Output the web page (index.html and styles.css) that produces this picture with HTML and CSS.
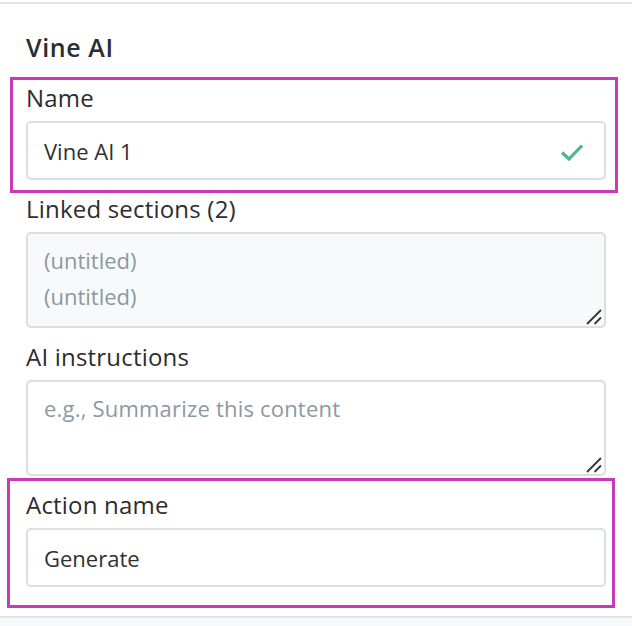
FILE: index.html
```html
<!DOCTYPE html>
<html lang="en">
<head>
<meta charset="utf-8">
<title>Vine AI</title>
<link rel="stylesheet" href="styles.css">
</head>
<body>
<div class="panel">
  <h2 class="title">Vine AI</h2>
  <div class="field">
    <label class="label" for="name">Name</label>
    <div class="control">
      <input class="input" id="name" type="text" value="Vine AI 1">
      <svg class="check" viewBox="0 0 24 18" width="24" height="18" aria-hidden="true">
        <path d="M2 9.5 L9 16 L22 2.5" fill="none" stroke="#4bb88b" stroke-width="3.2"/>
      </svg>
    </div>
  </div>
  <div class="field">
    <label class="label" for="linked">Linked sections (2)</label>
    <div class="control">
      <textarea class="textarea disabled" id="linked" disabled>(untitled)
(untitled)</textarea>
      <svg class="grip" viewBox="0 0 16 16" width="16" height="16" aria-hidden="true">
        <path d="M1 15 L15 1 M8.5 15 L15 8.5" stroke="#333538" stroke-width="1.8" fill="none"/>
      </svg>
    </div>
  </div>
  <div class="field">
    <label class="label" for="instr">AI instructions</label>
    <div class="control">
      <textarea class="textarea" id="instr" placeholder="e.g., Summarize this content"></textarea>
      <svg class="grip" viewBox="0 0 16 16" width="16" height="16" aria-hidden="true">
        <path d="M1 15 L15 1 M8.5 15 L15 8.5" stroke="#333538" stroke-width="1.8" fill="none"/>
      </svg>
    </div>
  </div>
  <div class="field">
    <label class="label" for="action">Action name</label>
    <div class="control">
      <input class="input" id="action" type="text" value="Generate">
    </div>
  </div>
</div>
<div class="footer"></div>
<div class="highlight hl-name"></div>
<div class="highlight hl-action"></div>
</body>
</html>
```
FILE: styles.css
```css
* { box-sizing: border-box; }
html, body { margin: 0; padding: 0; }
body {
  background: #ffffff;
  font-family: "Open Sans", "Liberation Sans", sans-serif;
  color: #2e3033;
  width: 632px;
  height: 626px;
  overflow: hidden;
  position: relative;
  padding-top: 2px;
}
.panel {
  border-top: 2px solid #e0e4e6;
  padding: 0 26px 30px 26px;
  width: 632px;
  height: 614px;
  display: flex;
  flex-direction: column;
}
.title {
  margin: 28px 0 21px 0;
  font-size: 25px;
  line-height: 30px;
  font-weight: 600;
  color: #2b2d30;
  letter-spacing: 0.6px;
}
.field {
  display: flex;
  flex-direction: column;
  gap: 8px;
  margin-bottom: 14px;
  width: 580px;
}
.label {
  font-size: 24px;
  line-height: 30px;
  font-weight: 400;
  color: #2b2d30;
  letter-spacing: 0.2px;
}
.control { position: relative; }
.input, .textarea {
  width: 580px;
  border: 2px solid #dcdfe1;
  border-radius: 5px;
  font-family: inherit;
  font-size: 22px;
  color: #2e3033;
  background: #ffffff;
  outline: none;
  margin: 0;
  display: block;
}
.input {
  height: 59px;
  padding: 0 16px;
  line-height: 55px;
}
.textarea {
  height: 96px;
  padding: 8px 16px;
  line-height: 36px;
  resize: none;
  letter-spacing: 0.2px;
}
.textarea::placeholder { color: #8c98a2; opacity: 1; }
.textarea.disabled {
  background: #f8f9fa;
  color: #8c98a2;
  -webkit-text-fill-color: #8c98a2;
  opacity: 1;
  letter-spacing: 0;
}
.check {
  position: absolute;
  right: 22px;
  top: 22px;
}
.grip {
  position: absolute;
  right: 4px;
  bottom: 3px;
}
.footer {
  border-top: 2px solid #e0e4e6;
  background: #f7f8f9;
  height: 10px;
  width: 632px;
}
.highlight {
  position: absolute;
  border: 3px solid #c83ab8;
  pointer-events: none;
}
.hl-name { left: 10px; top: 77px; width: 608px; height: 116px; }
.hl-action { left: 7px; top: 478px; width: 608px; height: 130px; }
```
